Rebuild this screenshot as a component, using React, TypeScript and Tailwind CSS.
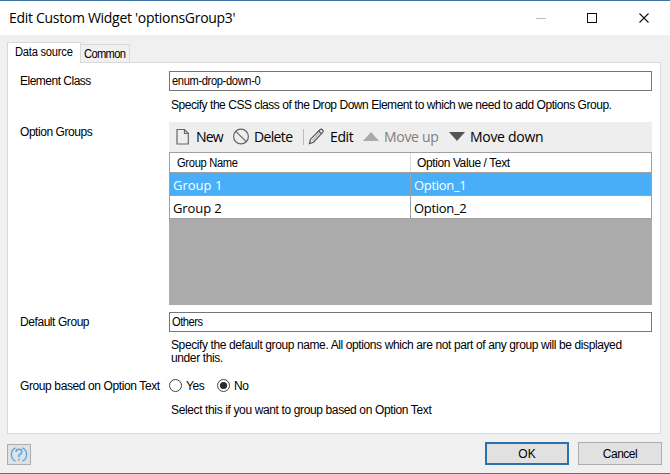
import type { ReactNode } from 'react';

const smallFont = "font-['Liberation_Sans',Arial,sans-serif] text-[12px] leading-[14px] whitespace-nowrap";
const uiFont = "font-['Open_Sans','Noto_Sans',sans-serif] whitespace-nowrap";
const condensed = 'block origin-left scale-x-[0.93]';

function Row({ label, spacing, children, className }: { label: string; spacing: string; children: ReactNode; className: string }) {
  return (
    <div className={`flex ${className}`}>
      <div className={`w-[149px] shrink-0 ${spacing}`}>{label}</div>
      {children}
    </div>
  );
}

function Radio({ checked }: { checked?: boolean }) {
  return (
    <svg width="14" height="14" viewBox="0 0 14 14" className="shrink-0">
      <circle cx="6.500" cy="6.500" r="6" fill="#fff" stroke="#444" />
      {checked && <circle cx="6.500" cy="6.500" r="3.600" fill="#2b2b2b" />}
    </svg>
  );
}

export default function App() {
  return (
    <div className={`flex h-[474px] w-[670px] flex-col overflow-hidden border-t border-b border-t-[#3f76a8] border-b-[#2d7fb8] bg-[#f0f0f0] text-black ${smallFont}`}>
      <header className="flex h-[34px] shrink-0 items-center bg-white pl-[9px]">
        <h1 className={`${uiFont} text-[14px] leading-[20px] tracking-[-0.3px]`}>Edit Custom Widget 'optionsGroup3'</h1>
        <svg width="114" height="12" viewBox="0 0 114 12" className="mr-[20px] ml-auto" shapeRendering="crispEdges">
          <path d="M0 6.5h10" stroke="#bbb" />
          <path d="M51.5 1.5h9v9h-9z" fill="none" stroke="#111" />
          <path d="M103.5 1.5l9 9M112.5 1.5l-9 9" stroke="#111" strokeWidth="1.1" shapeRendering="auto" />
        </svg>
      </header>

      <div className="mt-[7px] flex h-[20px] shrink-0 items-end pl-[7px]">
        <div className="z-10 -mb-px flex h-[21px] w-[74px] items-center border border-b-0 border-[#d9d9d9] bg-white pb-[2px] pl-[7px] tracking-[-0.25px]">
          <span className={condensed}>Data source</span>
        </div>
        <div className="flex h-[18px] w-[49px] items-center border border-b-0 border-l-0 border-[#d9d9d9] pt-px pl-[3px] tracking-[-0.7px]">
          <span className={condensed}>Common</span>
        </div>
      </div>

      <main className="mx-[7px] mr-[9px] flex h-[372px] shrink-0 flex-col border border-[#d9d9d9] bg-white pl-[12px]">
        <Row label="Element Class" spacing="pt-[3px] tracking-[-0.5px]" className="mt-[8px] h-[51px]">
          <div className="w-[483px]">
            <div className="flex h-[20px] items-center border border-[#777] pl-[2px] tracking-[-0.4px]">
              <span className={condensed}>enum-drop-down-0</span>
            </div>
            <p className="mt-[7px] pl-[2px] tracking-[-0.46px]">Specify the CSS class of the Drop Down Element to which we need to add Options Group.</p>
          </div>
        </Row>

        <Row label="Option Groups" spacing="pt-[3px] tracking-[-0.45px]" className="h-[190px]">
          <div className="flex h-[183px] w-[483px] flex-col bg-[#ababab]">
            <div className={`flex h-[30px] items-center bg-[#eee] ${uiFont} text-[14px] leading-[20px]`}>
              <svg width="14" height="18" viewBox="0 0 14 18" className="ml-[7px]" fill="none" stroke="#666" strokeWidth="1.2">
                <path d="M1 1.500h7.500l3.800 3.800V16H1zM8.500 1.500v4h4" />
              </svg>
              <span className="ml-[6px] w-[31px] tracking-[-0.8px]">New</span>
              <svg width="18" height="18" viewBox="0 0 18 18" className="ml-[5px]" fill="none" stroke="#666" strokeWidth="1.2">
                <circle cx="9" cy="8.500" r="7.400" />
                <path d="M3.800 3.300l10.400 10.400" />
              </svg>
              <span className="ml-[4px] w-[42px] tracking-[-0.65px]">Delete</span>
              <i className="ml-[7px] h-[16px] w-px bg-[#bbb]" />
              <svg width="17" height="18" viewBox="0 0 17 18" className="ml-[4px]" fill="none" stroke="#555" strokeWidth="1.2">
                <path d="M1.500 15.500l1-4.300L12.200 1.500q1-.8 2.200.3t.4 2.300L5.500 14.200zM10.800 3l2.700 2.800" />
                <path d="M4 12.700l7.500-7.900" strokeWidth="0.6" />
              </svg>
              <span className="ml-[5px] w-[24px] tracking-[-0.4px]">Edit</span>
              <svg width="16" height="10" viewBox="0 0 16 10" className="ml-[9px]">
                <path d="M8 0l8 9H0z" fill="#aaa" />
              </svg>
              <span className="ml-[5px] w-[56px] tracking-[-0.3px] text-[#808080]">Move up</span>
              <svg width="16" height="10" viewBox="0 0 16 10" className="ml-[9px]">
                <path d="M0 0h16L8 9z" fill="#555" />
              </svg>
              <span className="ml-[5px] tracking-[-0.3px]">Move down</span>
            </div>
            <div className="flex h-[21px] shrink-0 items-center border border-[#a0a0a0] bg-white">
              <div className="h-full w-[241px] border-r border-[#ddd] pt-[3px] pl-[7px] tracking-[-0.35px]">
                <span className={condensed}>Group Name</span>
              </div>
              <div className="h-full pt-[3px] pl-[6px] tracking-[-0.4px]">Option Value / Text</div>
            </div>
            <div className={`flex h-[23px] shrink-0 border border-t-0 border-[#a0a0a0] bg-[#48aef7] text-white ${uiFont} text-[13px] leading-[24px]`}>
              <div className="w-[241px] border-r border-[#a0a0a0] pl-[3px]">Group 1</div>
              <div className="pl-[3px] tracking-[-0.3px]">Option_1</div>
            </div>
            <div className={`flex h-[23px] shrink-0 border border-t-0 border-[#a0a0a0] bg-white ${uiFont} text-[13px] leading-[24px]`}>
              <div className="w-[241px] border-r border-[#a0a0a0] pl-[3px] tracking-[-0.1px]">Group 2</div>
              <div className="pl-[3px] tracking-[-0.3px]">Option_2</div>
            </div>
          </div>
        </Row>

        <Row label="Default Group" spacing="pt-[3px] tracking-[-0.43px]" className="h-[66px]">
          <div className="w-[483px]">
            <div className="flex h-[20px] items-center border border-[#777] pl-[2px] tracking-[-0.5px]">
              <span className={condensed}>Others</span>
            </div>
            <p className="mt-[7px] pl-[2px] leading-[13px] tracking-[-0.39px]">
              Specify the default group name. All options which are not part of any group will be displayed
              <br />
              under this.
            </p>
          </div>
        </Row>

        <Row label="Group based on Option Text" spacing="tracking-[-0.39px]" className="mt-[1px]">
          <div>
            <div className="flex h-[14px] items-center tracking-[-0.4px]">
              <Radio />
              <span className="ml-[3px] w-[31px]">Yes</span>
              <Radio checked />
              <span className="ml-[3px]">No</span>
            </div>
            <p className="mt-[10px] pl-[2px] tracking-[-0.37px]">Select this if you want to group based on Option Text</p>
          </div>
        </Row>
      </main>

      <footer className="flex items-start pt-[8px] pl-[7px]">
        <button className="mt-[2px] flex h-[21px] w-[24px] items-center justify-center border border-[#adadad] bg-[#e1e1e1]">
          <svg width="18" height="18" viewBox="0 0 18 18" className="shrink-0" fill="none" stroke="#4fa8ea" strokeWidth="1.3">
            <path d="M5.500 1.800A7.500 7.500 0 0 0 5.500 15.200M12.500 1.800A7.500 7.500 0 0 1 12.500 15.200" />
            <path d="M6 6Q6.200 3.200 9 3.200t2.900 2.500Q11.900 7.300 9 9V11.300M9 12.700v1.800" strokeWidth="1.500" />
          </svg>
        </button>
        <button className="ml-[454px] h-[23px] w-[84px] border-2 border-[#2a72ad] bg-[#e1e1e1]">OK</button>
        <button className="ml-[9px] h-[23px] w-[84px] border border-[#adadad] bg-[#e1e1e1] tracking-[-0.5px]">Cancel</button>
      </footer>
    </div>
  );
}
